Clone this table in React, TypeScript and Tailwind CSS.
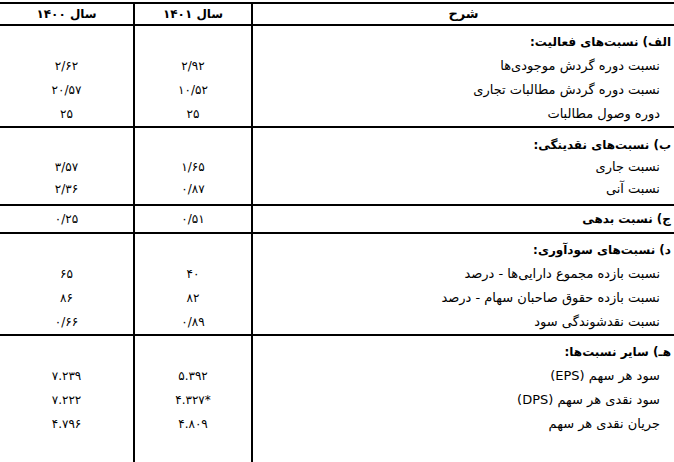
type Row = { label: string; y1401: string; y1400: string };
type Section = {
  title: string;
  rows: Row[];
  title1401?: string;
  title1400?: string;
  box: string;
  line: string;
};

const sections: Section[] = [
  {
    title: "الف) نسبت‌های فعالیت:",
    box: "pt-1",
    line: "h-6",
    rows: [
      { label: "نسبت دوره گردش موجودی‌ها", y1401: "۲/۹۲", y1400: "۲/۶۲" },
      { label: "نسبت دوره گردش مطالبات تجاری", y1401: "۱۰/۵۲", y1400: "۲۰/۵۷" },
      { label: "دوره وصول مطالبات", y1401: "۲۵", y1400: "۲۵" },
    ],
  },
  {
    title: "ب) نسبت‌های نقدینگی:",
    box: "pt-[6px] pb-1",
    line: "h-[22px]",
    rows: [
      { label: "نسبت جاری", y1401: "۱/۶۵", y1400: "۳/۵۷" },
      { label: "نسبت آنی", y1401: "۰/۸۷", y1400: "۲/۳۶" },
    ],
  },
  {
    title: "ج) نسبت بدهی",
    title1401: "۰/۵۱",
    title1400: "۰/۲۵",
    box: "",
    line: "h-[26px]",
    rows: [],
  },
  {
    title: "د) نسبت‌های سودآوری:",
    box: "pt-1",
    line: "h-6",
    rows: [
      { label: "نسبت بازده مجموع دارایی‌ها - درصد", y1401: "۴۰", y1400: "۶۵" },
      { label: "نسبت بازده حقوق صاحبان سهام - درصد", y1401: "۸۲", y1400: "۸۶" },
      { label: "نسبت نقدشوندگی سود", y1401: "۰/۸۹", y1400: "۰/۶۶" },
    ],
  },
  {
    title: "هـ) سایر نسبت‌ها:",
    box: "pt-1 pb-[26px]",
    line: "h-6",
    rows: [
      { label: "سود هر سهم (EPS)", y1401: "۵.۳۹۲", y1400: "۷.۲۳۹" },
      { label: "سود نقدی هر سهم (DPS)", y1401: "۴.۳۲۷*", y1400: "۷.۲۲۲" },
      { label: "جریان نقدی هر سهم", y1401: "۴.۸۰۹", y1400: "۴.۷۹۶" },
    ],
  },
];

const cols = "grid grid-cols-[423px_118px_133px]";

export default function App() {
  return (
    <div
      dir="rtl"
      className="w-[674px] h-[462px] overflow-hidden bg-white pt-[2px] text-black"
      style={{ fontFamily: '"DejaVu Sans", "Noto Sans", sans-serif' }}
    >
      <div className={`${cols} h-6 border-y-2 border-black text-[12px] font-bold`}>
        <div className="flex items-center justify-center border-l-2 border-black text-[13px]">شرح</div>
        <div className="flex items-center justify-center border-l-2 border-black">سال ۱۴۰۱</div>
        <div className="flex items-center justify-center">سال ۱۴۰۰</div>
      </div>

      {sections.map((s, i) => (
        <div
          key={s.title}
          className={`${cols} ${i < sections.length - 1 ? "border-b-2 border-black" : ""}`}
        >
          <div className={`border-l-2 border-black ${s.box}`}>
            <div className={`${s.line} flex items-center pr-[3px] text-[12px] font-bold`}>
              {s.title}
            </div>
            {s.rows.map((r) => (
              <div key={r.label} className={`${s.line} flex items-center pr-[14px] text-[13px]`}>
                {r.label}
              </div>
            ))}
          </div>
          <div className={`border-l-2 border-black text-[12px] ${s.box}`}>
            <div className={`${s.line} flex items-center justify-center`}>{s.title1401}</div>
            {s.rows.map((r) => (
              <div key={r.label} className={`${s.line} flex items-center justify-center`}>
                <span dir="ltr">{r.y1401}</span>
              </div>
            ))}
          </div>
          <div className={`text-[12px] ${s.box}`}>
            <div className={`${s.line} flex items-center justify-center`}>{s.title1400}</div>
            {s.rows.map((r) => (
              <div key={r.label} className={`${s.line} flex items-center justify-center`}>
                <span dir="ltr">{r.y1400}</span>
              </div>
            ))}
          </div>
        </div>
      ))}
    </div>
  );
}
